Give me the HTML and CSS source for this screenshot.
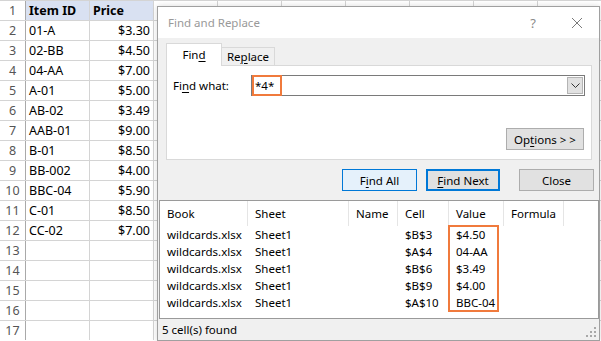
FILE: index.html
```html
<html lang="en">

<head>
    <title>Find and Replace</title>
    <link rel="stylesheet" href="styles.css">
</head>

<body>
    <div class="sheet">
        <div class="row">
            <span class="rn">1</span><span class="cell hd">Item ID</span><span class="cell hd">Price</span><span class="rest"></span>
        </div>
        <div class="row">
            <span class="rn">2</span><span class="cell">01-A</span><span class="cell num">$3.30</span><span class="rest"></span>
        </div>
        <div class="row">
            <span class="rn">3</span><span class="cell">02-BB</span><span class="cell num">$4.50</span><span class="rest"></span>
        </div>
        <div class="row">
            <span class="rn">4</span><span class="cell">04-AA</span><span class="cell num">$7.00</span><span class="rest"></span>
        </div>
        <div class="row">
            <span class="rn">5</span><span class="cell">A-01</span><span class="cell num">$5.00</span><span class="rest"></span>
        </div>
        <div class="row">
            <span class="rn">6</span><span class="cell">AB-02</span><span class="cell num">$3.49</span><span class="rest"></span>
        </div>
        <div class="row">
            <span class="rn">7</span><span class="cell">AAB-01</span><span class="cell num">$9.00</span><span class="rest"></span>
        </div>
        <div class="row">
            <span class="rn">8</span><span class="cell">B-01</span><span class="cell num">$8.50</span><span class="rest"></span>
        </div>
        <div class="row">
            <span class="rn">9</span><span class="cell">BB-002</span><span class="cell num">$4.00</span><span class="rest"></span>
        </div>
        <div class="row">
            <span class="rn">10</span><span class="cell">BBC-04</span><span class="cell num">$5.90</span><span class="rest"></span>
        </div>
        <div class="row">
            <span class="rn">11</span><span class="cell">C-01</span><span class="cell num">$8.50</span><span class="rest"></span>
        </div>
        <div class="row">
            <span class="rn">12</span><span class="cell">CC-02</span><span class="cell num">$7.00</span><span class="rest"></span>
        </div>
        <div class="row">
            <span class="rn">13</span><span class="cell"></span><span class="cell"></span><span class="rest"></span>
        </div>
        <div class="row">
            <span class="rn">14</span><span class="cell"></span><span class="cell"></span><span class="rest"></span>
        </div>
        <div class="row">
            <span class="rn">15</span><span class="cell"></span><span class="cell"></span><span class="rest"></span>
        </div>
        <div class="row">
            <span class="rn">16</span><span class="cell"></span><span class="cell"></span><span class="rest"></span>
        </div>
        <div class="row">
            <span class="rn">17</span><span class="cell"></span><span class="cell"></span><span class="rest"></span>
        </div>
    </div>

    <div class="dialog">
        <div class="titlebar">
            <span class="title">Find and Replace</span>
            <span class="help">?</span>
            <svg class="close-x" width="12" height="12" viewBox="0 0 12 12">
                <path d="M1 1 L11 11 M11 1 L1 11" stroke="#7a7a7a" stroke-width="1" fill="none" />
            </svg>
        </div>

        <div class="tabs">
            <div class="tab active">Fin<u>d</u></div>
            <div class="tab">Re<u>p</u>lace</div>
        </div>

        <div class="panel">
            <div class="find-row">
                <span class="label">Fi<u>n</u>d what:</span>
                <div class="combo">
                    <span class="query">*4*</span>
                    <span class="drop">
                        <svg width="9" height="5" viewBox="0 0 9 5">
                            <path d="M0.5 0.5 L4.5 4.5 L8.5 0.5" stroke="#333" stroke-width="1" fill="none" />
                        </svg>
                    </span>
                </div>
            </div>
            <div class="opt-row">
                <button class="btn btn-options">Op<u>t</u>ions &gt; &gt;</button>
            </div>
        </div>

        <div class="actions">
            <button class="btn btn-hover">F<u>i</u>nd All</button>
            <button class="btn btn-default"><u>F</u>ind Next</button>
            <button class="btn btn-close">Close</button>
        </div>

        <div class="results">
            <div class="rgrid rhead">
                <span>Book</span><span>Sheet</span><span>Name</span><span>Cell</span><span>Value</span><span>Formula</span><span class="blank"></span>
            </div>
            <div class="rgrid">
                <span>wildcards.xlsx</span><span>Sheet1</span><span></span><span>$B$3</span><span>$4.50</span><span></span><span></span>
            </div>
            <div class="rgrid">
                <span>wildcards.xlsx</span><span>Sheet1</span><span></span><span>$A$4</span><span>04-AA</span><span></span><span></span>
            </div>
            <div class="rgrid">
                <span>wildcards.xlsx</span><span>Sheet1</span><span></span><span>$B$6</span><span>$3.49</span><span></span><span></span>
            </div>
            <div class="rgrid">
                <span>wildcards.xlsx</span><span>Sheet1</span><span></span><span>$B$9</span><span>$4.00</span><span></span><span></span>
            </div>
            <div class="rgrid">
                <span>wildcards.xlsx</span><span>Sheet1</span><span></span><span>$A$10</span><span>BBC-04</span><span></span><span></span>
            </div>
            <div class="value-mark"></div>
        </div>

        <div class="status">
            <span>5 cell(s) found</span>
            <svg class="grip" width="10" height="10" viewBox="0 0 10 10">
                <rect x="8" y="0" width="2" height="2" fill="#a8a8a8" />
                <rect x="4" y="4" width="2" height="2" fill="#a8a8a8" />
                <rect x="8" y="4" width="2" height="2" fill="#a8a8a8" />
                <rect x="0" y="8" width="2" height="2" fill="#a8a8a8" />
                <rect x="4" y="8" width="2" height="2" fill="#a8a8a8" />
                <rect x="8" y="8" width="2" height="2" fill="#a8a8a8" />
            </svg>
        </div>
    </div>
</body>
</html>
```

FILE: styles.css
```css
body {
    margin: 0;
    padding: 0;
    width: 601px;
    height: 341px;
    overflow: hidden;
    background: #fff;
    font-family: "Noto Sans", "Open Sans", sans-serif;
    position: relative;
}

/* spreadsheet behind the dialog */
.sheet {
    display: flex;
    flex-direction: column;
    gap: 1px;
    padding-top: 1px;
    background: #d4d4d4;
    font-size: 12.5px;
    color: #000;
}

.row {
    display: grid;
    grid-template-columns: 25px 63px 63px 1fr;
    column-gap: 1px;
    height: 19px;
}

.row span {
    background: #fff;
    line-height: 19px;
    white-space: nowrap;
}

.rn {
    text-align: center;
    color: #555;
    box-shadow: 1px 0 0 #a9a9a9;
}

.cell {
    padding: 0 3px;
}

.cell.hd {
    background: #d9e1f2 !important;
    font-weight: bold;
}

.cell.num {
    text-align: right;
}

.rest {
    background: repeating-linear-gradient(to right, #fff 0 63px, #d4d4d4 63px 64px) !important;
}

/* dialog */
.dialog {
    position: absolute;
    left: 157px;
    top: 6px;
    width: 441px;
    height: 333px;
    border: 1px solid #a0a0a0;
    background: #f0f0f0;
    box-shadow: 0 0 6px rgba(0, 0, 0, 0.15);
    display: flex;
    flex-direction: column;
    font-size: 11.5px;
    color: #000;
}

.dialog u {
    text-decoration-thickness: 1px;
    text-underline-offset: 2px;
}

.titlebar {
    height: 31px;
    background: #fff;
    display: flex;
    align-items: center;
    padding-left: 10px;
}

.title {
    font-size: 11.5px;
    color: #999;
    flex: 1;
}

.help {
    color: #8a8a8a;
    font-size: 13px;
    margin-right: 35px;
}

.close-x {
    margin-right: 16px;
}

.tabs {
    display: flex;
    align-items: flex-end;
    height: 21px;
    margin: 6px 0 0 8px;
    position: relative;
    z-index: 1;
}

.tab {
    height: 17px;
    width: 52px;
    line-height: 17px;
    text-align: center;
    border: 1px solid #d9d9d9;
    border-bottom: none;
    background: #f0f0f0;
    margin-left: -1px;
}

.tab.active {
    height: 22px;
    width: 54px;
    line-height: 22px;
    margin-left: 0;
    margin-bottom: -1px;
    background: #fff;
    position: relative;
    z-index: 2;
}

.panel {
    margin: 0 7px 0 8px;
    background: #fff;
    border: 1px solid #d9d9d9;
    display: flex;
    flex-direction: column;
    padding: 9px 6px 0 6px;
    box-sizing: border-box;
    height: 95px;
}

.find-row {
    display: flex;
    align-items: center;
}

.label {
    width: 78px;
}

.combo {
    flex: 1;
    height: 21px;
    box-sizing: border-box;
    border: 1px solid #7a7a7a;
    display: flex;
    align-items: center;
    position: relative;
}

.query {
    padding-left: 3px;
    flex: 1;
}

.query::before {
    content: "";
    position: absolute;
    left: 0;
    top: -1px;
    width: 30px;
    height: 21px;
    box-sizing: border-box;
    border: 2px solid #f07a3c;
}

.drop {
    width: 16px;
    height: 17px;
    margin-right: 1px;
    background: #e1e1e1;
    border: 1px solid #b4b4b4;
    box-sizing: border-box;
    display: flex;
    align-items: center;
    justify-content: center;
}

.opt-row {
    display: flex;
    justify-content: flex-end;
    margin-top: 32px;
    padding-right: 1px;
}

.btn {
    font-family: inherit;
    font-size: 11.5px;
    color: #000;
    height: 22px;
    width: 75px;
    padding: 0;
    background: #e1e1e1;
    border: 1px solid #adadad;
    box-sizing: border-box;
}

.btn-options {
    width: 78px;
}

.btn-hover {
    background: #e5f1fb;
    border-color: #0078d7;
}

.btn-default {
    border: 2px solid #0078d7;
    width: 74px;
}

.actions {
    display: flex;
    justify-content: flex-end;
    gap: 9px;
    margin: 9px 5px 0 0;
}

.btn-close {
    margin-left: 10px;
}

.results {
    margin: 9px 0 0 1px;
    height: 119px;
    box-sizing: border-box;
    background: #fff;
    border: 1px solid #9a9a9a;
    position: relative;
}

.rgrid {
    display: grid;
    grid-template-columns: 88px 101px 49px 51px 55px 60px 1fr;
    height: 17px;
    line-height: 17px;
}

.rgrid span {
    padding-left: 7px;
    white-space: nowrap;
}

.rhead {
    height: 25px;
    line-height: 25px;
}

.rhead span {
    border-right: 1px solid #e5e5e5;
}

.rhead span.blank {
    border-right: none;
}

.value-mark {
    position: absolute;
    left: 288px;
    top: 24px;
    width: 51px;
    height: 87px;
    box-sizing: border-box;
    border: 2px solid #f07a3c;
}

.status {
    flex: 1;
    display: flex;
    align-items: center;
    justify-content: space-between;
    padding: 0 3px 0 4px;
}

.grip {
    align-self: flex-end;
    margin-bottom: 3px;
}
```
